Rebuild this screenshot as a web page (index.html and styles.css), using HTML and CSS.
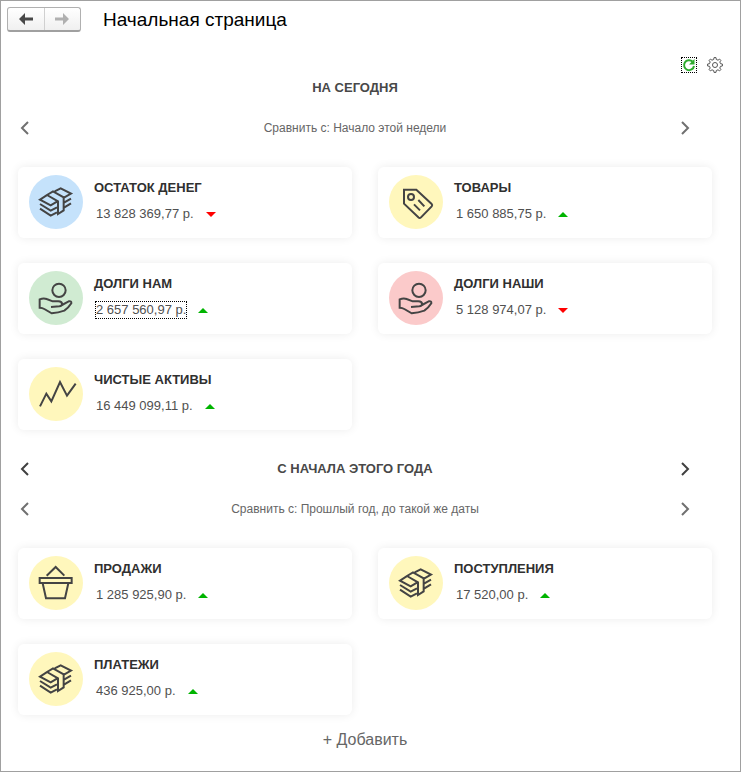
FILE: index.html
```html
<!DOCTYPE html>
<html lang="ru">
<head>
<meta charset="utf-8">
<title>Начальная страница</title>
<link rel="stylesheet" href="styles.css">
</head>
<body>
<svg class="defs" aria-hidden="true">
  <symbol id="money" viewBox="0 0 162 162">
    <path d="M56 59 33 74 65 91 84 80M33 87 65 107 84 97M33 101 65 122 84 112M54 60 72 49 104 67V106L87 117V79L54 60M77 49 95 40 126 56 105 68M126 71 105 83M126 85 105 98"/>
  </symbol>
  <symbol id="tag" viewBox="0 0 162 162">
    <path d="M46 44H82L128 87Q131 90 128 94L96 127Q92 131 88 127L45 86V44ZM88 75 106 94M75 88 93 106"/>
    <circle cx="66" cy="66" r="9"/>
  </symbol>
  <symbol id="hand" viewBox="0 0 162 162">
    <circle cx="90" cy="58" r="20"/>
    <path d="M66 108 91 106Q99 105 99 99Q99 91 88 91H71L53 84Q44 80 32 85V110Q40 110 46 114L68 127Q88 125 106 119Q119 110 127 97Q128 89 119 91L99 102"/>
  </symbol>
  <symbol id="chart" viewBox="0 0 162 162">
    <path d="M33 118 52 80 67 103 93 45 114 86 140 50"/>
  </symbol>
  <symbol id="basket" viewBox="0 0 162 162">
    <path d="M32 66H128V81H32ZM41 82 51 127H108L118 82M53 59 80 33 106 59"/>
  </symbol>
  <symbol id="left" viewBox="0 0 10 14"><path d="M8 1 2 7 8 13"/></symbol>
  <symbol id="right" viewBox="0 0 10 14"><path d="M2 1 8 7 2 13"/></symbol>
</svg>
<div class="page">
  <header class="header">
    <div class="history">
      <button type="button" aria-label="Назад"><svg viewBox="0 0 14 12"><path d="M0 6 6 0V4.500H14V7.500H6V12Z"/></svg></button>
      <button type="button" aria-label="Вперед" disabled><svg viewBox="0 0 14 12"><path d="M14 6 8 0V4.500H0V7.500H8V12Z"/></svg></button>
    </div>
    <h1>Начальная страница</h1>
  </header>
  <div class="tools">
    <button type="button" class="refresh" aria-label="Обновить"><svg viewBox="0 0 16 16"><path class="arc" d="M11.500 4.500A5 5 0 1 0 13 9"/><path class="tip" d="M13.500 2V7.500H8Z"/></svg></button>
    <button type="button" aria-label="Настройки"><svg viewBox="0 0 16 16"><path class="gear" d="M6.7 2.5 7 .6H9L9.3 2.5 11 3.2 12.6 2.1 13.9 3.4 12.8 5 13.5 6.7 15.4 7V9L13.5 9.3 12.8 11 13.9 12.6 12.6 13.9 11 12.8 9.3 13.5 9 15.4H7L6.7 13.5 5 12.8 3.4 13.9 2.1 12.6 3.2 11 2.5 9.3.6 9V7L2.5 6.7 3.2 5 2.1 3.4 3.4 2.1 5 3.2Z"/><circle class="gear" cx="8" cy="8" r="2.5"/></svg></button>
  </div>
  <main>
    <section>
      <div class="bar"><h2>НА СЕГОДНЯ</h2></div>
      <div class="bar compare">
        <button type="button" aria-label="Предыдущее сравнение"><svg><use href="#left"/></svg></button>
        <p>Сравнить с: Начало этой недели</p>
        <button type="button" aria-label="Следующее сравнение"><svg><use href="#right"/></svg></button>
      </div>
      <div class="cards">
        <article class="card"><svg class="icon blue"><use href="#money"/></svg><div><h3>ОСТАТОК ДЕНЕГ</h3><p class="value"><a href="#">13 828 369,77 р.</a><i class="down"></i></p></div></article>
        <article class="card"><svg class="icon yellow"><use href="#tag"/></svg><div><h3>ТОВАРЫ</h3><p class="value"><a href="#">1 650 885,75 р.</a><i class="up"></i></p></div></article>
        <article class="card"><svg class="icon green"><use href="#hand"/></svg><div><h3>ДОЛГИ НАМ</h3><p class="value"><a href="#" class="focused">2 657 560,97 р.</a><i class="up"></i></p></div></article>
        <article class="card"><svg class="icon red"><use href="#hand"/></svg><div><h3>ДОЛГИ НАШИ</h3><p class="value"><a href="#">5 128 974,07 р.</a><i class="down"></i></p></div></article>
        <article class="card"><svg class="icon yellow"><use href="#chart"/></svg><div><h3>ЧИСТЫЕ АКТИВЫ</h3><p class="value"><a href="#">16 449 099,11 р.</a><i class="up"></i></p></div></article>
      </div>
    </section>
    <section>
      <div class="bar period">
        <button type="button" aria-label="Предыдущий период"><svg><use href="#left"/></svg></button>
        <h2>С НАЧАЛА ЭТОГО ГОДА</h2>
        <button type="button" aria-label="Следующий период"><svg><use href="#right"/></svg></button>
      </div>
      <div class="bar compare">
        <button type="button" aria-label="Предыдущее сравнение"><svg><use href="#left"/></svg></button>
        <p>Сравнить с: Прошлый год, до такой же даты</p>
        <button type="button" aria-label="Следующее сравнение"><svg><use href="#right"/></svg></button>
      </div>
      <div class="cards">
        <article class="card"><svg class="icon yellow"><use href="#basket"/></svg><div><h3>ПРОДАЖИ</h3><p class="value"><a href="#">1 285 925,90 р.</a><i class="up"></i></p></div></article>
        <article class="card"><svg class="icon yellow"><use href="#money"/></svg><div><h3>ПОСТУПЛЕНИЯ</h3><p class="value"><a href="#">17 520,00 р.</a><i class="up"></i></p></div></article>
        <article class="card"><svg class="icon yellow"><use href="#money"/></svg><div><h3>ПЛАТЕЖИ</h3><p class="value"><a href="#">436 925,00 р.</a><i class="up"></i></p></div></article>
      </div>
    </section>
    <button type="button" class="add">+ Добавить</button>
  </main>
</div>
</body>
</html>
```
FILE: styles.css
```css
* { box-sizing: border-box; }
body { margin: 0; background: #fff; font-family: "Liberation Sans", Arial, sans-serif; }
h1, h2, h3, p { margin: 0; }
button { padding: 0; border: 0; background: none; font: inherit; color: inherit; cursor: pointer; }
svg { display: block; }
.defs { position: absolute; width: 0; height: 0; }
.page { min-height: 100vh; border: 1px solid #a0a0a0; }

.header { display: flex; align-items: center; gap: 22px; padding: 6px 6px 0; }
.header h1 { font-size: 19px; line-height: 24px; font-weight: 400; color: #000; }
.history { display: flex; width: 74px; height: 25px; border: 1px solid #b0b0b0; border-bottom: 2px solid #a0a0a0; border-radius: 3px; background: linear-gradient(#fff, #f0f0f0); }
.history button { flex: 1; display: flex; align-items: center; justify-content: center; }
.history button + button { border-left: 1px solid #d0d0d0; }
.history svg { width: 14px; height: 12px; fill: #484848; }
.history button:disabled svg { fill: #b0b0b0; }

.tools { display: flex; justify-content: flex-end; gap: 10px; padding: 25px 17px 0; }
.tools svg { width: 16px; height: 16px; fill: none; }
.refresh { outline: 1px dotted #000; outline-offset: -1px; }
.arc { stroke: #2eab2e; stroke-width: 2; }
.tip { fill: #2eab2e; }
.gear { stroke: #555; stroke-width: 1; }

main { display: flex; flex-direction: column; padding: 0 28px 0 17px; }
section + section { margin-top: 24px; }
.bar { display: flex; align-items: center; justify-content: center; height: 30px; padding: 0 22px 0 2px; text-align: center; }
.compare { height: 50px; }
.bar h2, .bar p { flex: 1; }
.bar h2 { font-size: 13px; line-height: 20px; font-weight: 700; color: #484848; }
.bar p { font-size: 12px; line-height: 20px; color: #666; }
.bar svg { width: 10px; height: 14px; fill: none; stroke: #707070; stroke-width: 2; }
.period svg { stroke: #404040; }

.cards { display: grid; grid-template-columns: 1fr 1fr; gap: 25px 26px; padding-top: 14px; }
.card { display: flex; gap: 11px; padding: 8px 11px 9px; border-radius: 6px; box-shadow: 0 0 10px rgba(0, 0, 0, .08); }
.icon { width: 54px; height: 54px; border-radius: 50%; fill: none; stroke: #444; stroke-width: 6; }
.blue { background: #c5e2fb; }
.yellow { background: #fff7bc; }
.green { background: #d0ebd2; }
.red { background: #fbcaca; }
.card h3 { font-size: 13px; line-height: 26px; font-weight: 700; color: #303030; }
.value { display: flex; align-items: center; gap: 11px; height: 26px; padding-left: 1px; }
.value a { padding: 0 1px; font-size: 13px; line-height: 18px; color: #505050; text-decoration: none; }
.value .focused { outline: 1px dotted #000; outline-offset: -1px; }
.up, .down { border: 0 solid transparent; border-width: 0 5px; }
.up { border-bottom: 5px solid #00b400; }
.down { border-top: 5px solid #f00; }
.add { align-self: center; margin-top: 15px; font-size: 16px; line-height: 20px; color: #666; }
```
